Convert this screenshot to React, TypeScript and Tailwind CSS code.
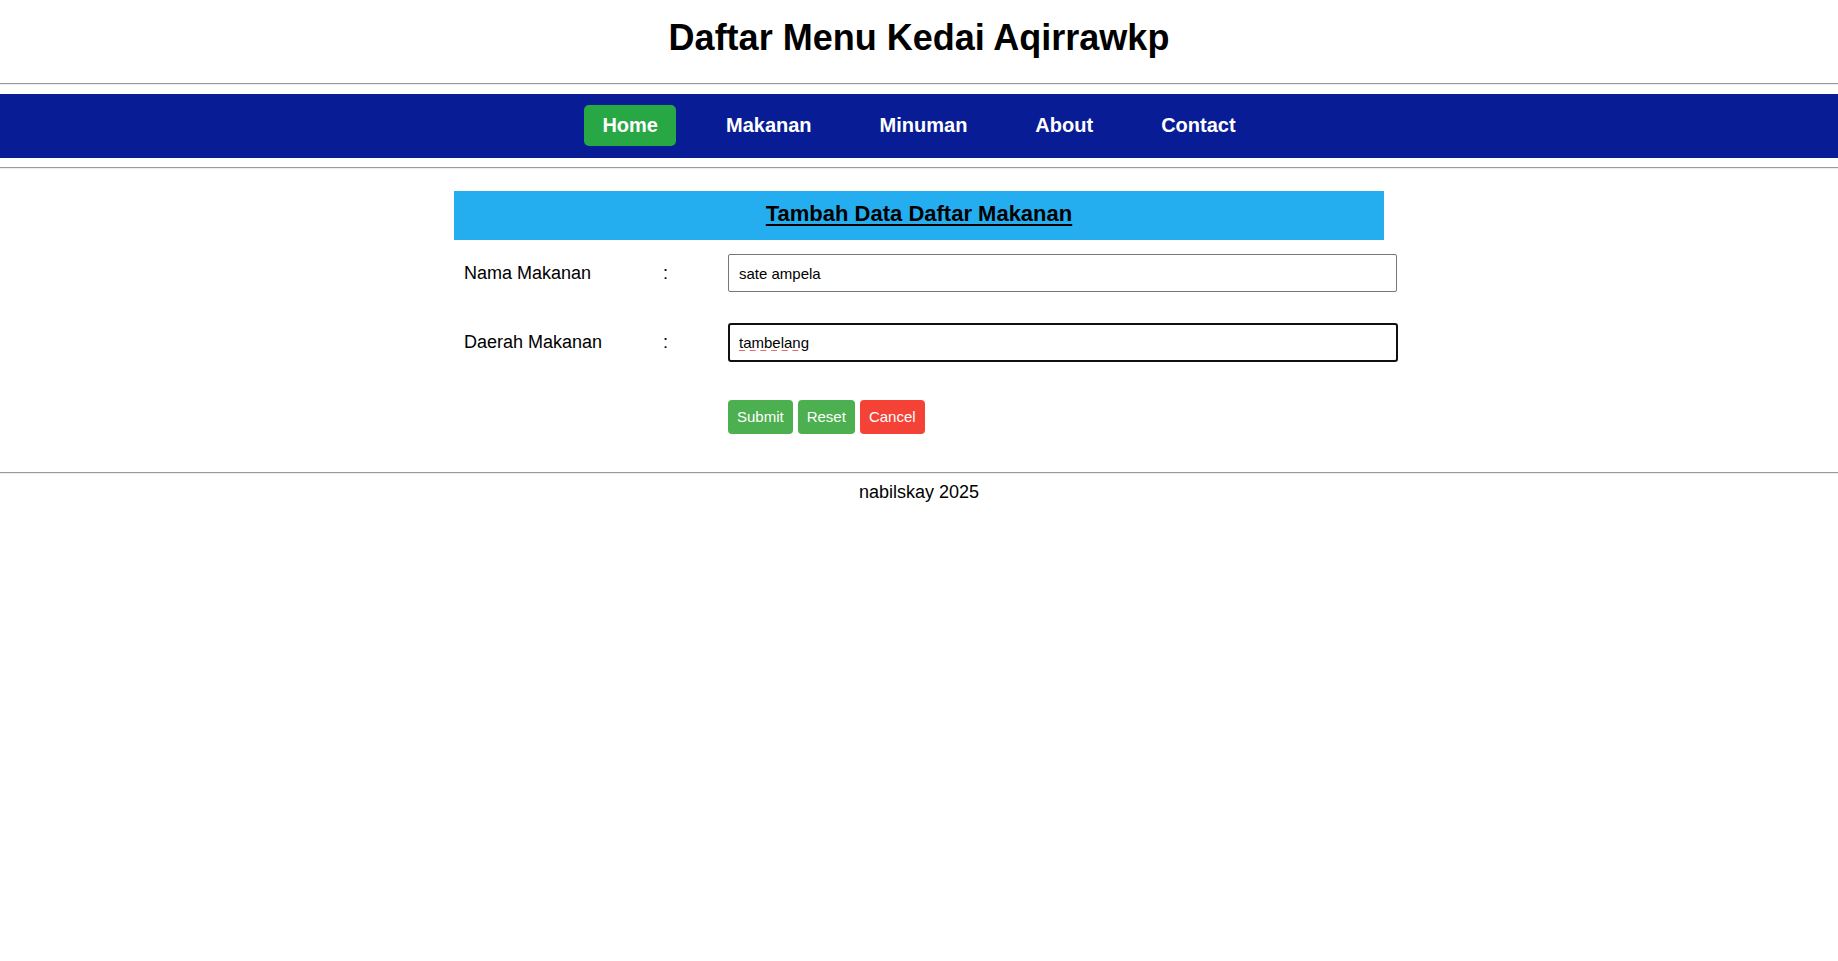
import { useState } from "react";

const navItems = ["Home", "Makanan", "Minuman", "About", "Contact"];

const Divider = () => (
  <div className="border-t border-b border-t-[#9a9a9a] border-b-[#eeeeee]" />
);

export default function App() {
  const [nama, setNama] = useState("sate ampela");
  const [daerah, setDaerah] = useState("tambelang");

  return (
    <div className="min-h-screen bg-white text-black font-['Liberation_Sans',Arial,sans-serif]">
      {/* judul */}
      <h1 className="pt-[18px] text-center text-[36px] font-bold leading-[40px]">
        Daftar Menu Kedai Aqirrawkp
      </h1>
      <div className="mt-[25px]">
        <Divider />
      </div>

      {/* navigasi */}
      <nav className="mt-[9px] flex h-[64px] items-center justify-center gap-8 bg-[#081c96] pb-[2px]">
        {navItems.map((item) => (
          <a
            key={item}
            href="#"
            className={
              item === "Home"
                ? "flex h-[41px] items-center rounded-[5px] bg-[#28a745] px-[18px] text-[20px] font-bold text-white"
                : "flex h-[41px] items-center rounded-[5px] px-[18px] text-[20px] font-bold text-white"
            }
          >
            {item}
          </a>
        ))}
      </nav>
      <div className="mt-[9px]">
        <Divider />
      </div>

      {/* form tambah data */}
      <div className="mx-auto mt-[22px] w-[930px]">
        <div className="h-[49px] bg-[#24aeef] pt-[10px] text-center text-[22px] font-bold leading-[25px] underline underline-offset-[3px]">
          Tambah Data Daftar Makanan
        </div>

        <div className="mt-[14px] flex flex-col gap-[31px] pl-[10px]">
          <div className="grid grid-cols-[199px_65px_669px] items-center text-[18px]">
            <span>Nama Makanan</span>
            <span>:</span>
            <input
              value={nama}
              onChange={(e) => setNama(e.target.value)}
              className="h-[38px] w-[669px] rounded-[2px] border border-[#767676] px-[10px] text-[15px] outline-none"
            />
          </div>
          <div className="grid grid-cols-[199px_65px_669px] items-center text-[18px]">
            <span>Daerah Makanan</span>
            <span>:</span>
            <input
              value={daerah}
              onChange={(e) => setDaerah(e.target.value)}
              className="h-[39px] w-[670px] rounded-[3px] border-2 border-[#101010] px-[9px] text-[15px] underline decoration-dashed decoration-[#e53935] underline-offset-[3px] outline-none"
            />
          </div>
        </div>

        <div className="mt-[38px] flex gap-[5px] pl-[274px]">
          <button className="h-[34px] rounded-[4px] bg-[#4caf50] px-[9px] text-[15px] text-white">
            Submit
          </button>
          <button className="h-[34px] rounded-[4px] bg-[#4caf50] px-[9px] text-[15px] text-white">
            Reset
          </button>
          <button className="h-[34px] rounded-[4px] bg-[#f44336] px-[9px] text-[15px] text-white">
            Cancel
          </button>
        </div>
      </div>

      {/* footer */}
      <div className="mt-[38px]">
        <Divider />
      </div>
      <footer className="mt-[5px] text-center text-[18px]">nabilskay 2025</footer>
    </div>
  );
}
